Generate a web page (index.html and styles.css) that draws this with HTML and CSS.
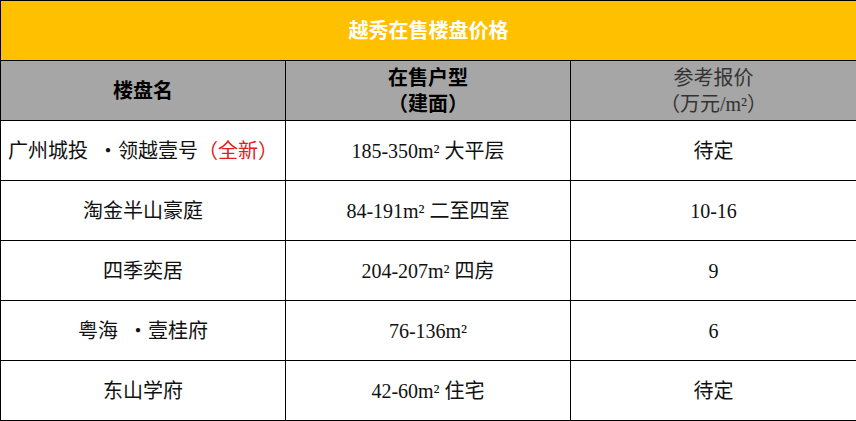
FILE: index.html
```html
<!DOCTYPE html>
<html lang="zh-CN">
<head>
<meta charset="utf-8">
<title>越秀在售楼盘价格</title>
<link rel="stylesheet" href="styles.css">
</head>
<body>
<table class="price-table">
  <colgroup>
    <col class="col-a">
    <col class="col-b">
    <col class="col-c">
  </colgroup>
  <tr class="title-row">
    <td colspan="3">越秀在售楼盘价格</td>
  </tr>
  <tr class="head-row">
    <td class="bold">楼盘名</td>
    <td class="bold">在售户型<br>（建面）</td>
    <td class="light">参考报价<br>（万元/m²）</td>
  </tr>
  <tr>
    <td>广州城投&ensp;・领越壹号<span class="red">（全新）</span></td>
    <td>185-350m² 大平层</td>
    <td>待定</td>
  </tr>
  <tr>
    <td>淘金半山豪庭</td>
    <td>84-191m² 二至四室</td>
    <td>10-16</td>
  </tr>
  <tr>
    <td>四季奕居</td>
    <td>204-207m² 四房</td>
    <td>9</td>
  </tr>
  <tr>
    <td>粤海&ensp;・壹桂府</td>
    <td>76-136m²</td>
    <td>6</td>
  </tr>
  <tr>
    <td>东山学府</td>
    <td>42-60m² 住宅</td>
    <td>待定</td>
  </tr>
</table>
</body>
</html>
```

FILE: styles.css
```css
html, body {
  margin: 0;
  padding: 0;
  background: #ffffff;
}

.price-table {
  border-collapse: collapse;
  width: 856px;
  table-layout: fixed;
  font-family: "Liberation Serif", "Noto Sans CJK SC", serif;
  font-size: 20px;
  color: #111111;
}

.col-a { width: 285px; }
.col-b { width: 285px; }
.col-c { width: 286px; }

.price-table td {
  border: 1px solid #000000;
  height: 59px;
  padding: 0;
  text-align: center;
  vertical-align: middle;
  white-space: nowrap;
  line-height: 26px;
}

.title-row td {
  background: #ffc000;
  color: #ffffff;
  font-weight: bold;
}

.head-row td {
  background: #a6a6a6;
}

.bold {
  font-weight: bold;
  color: #000000;
}

.light {
  color: #333333;
}

.red {
  color: #e02020;
}
```
